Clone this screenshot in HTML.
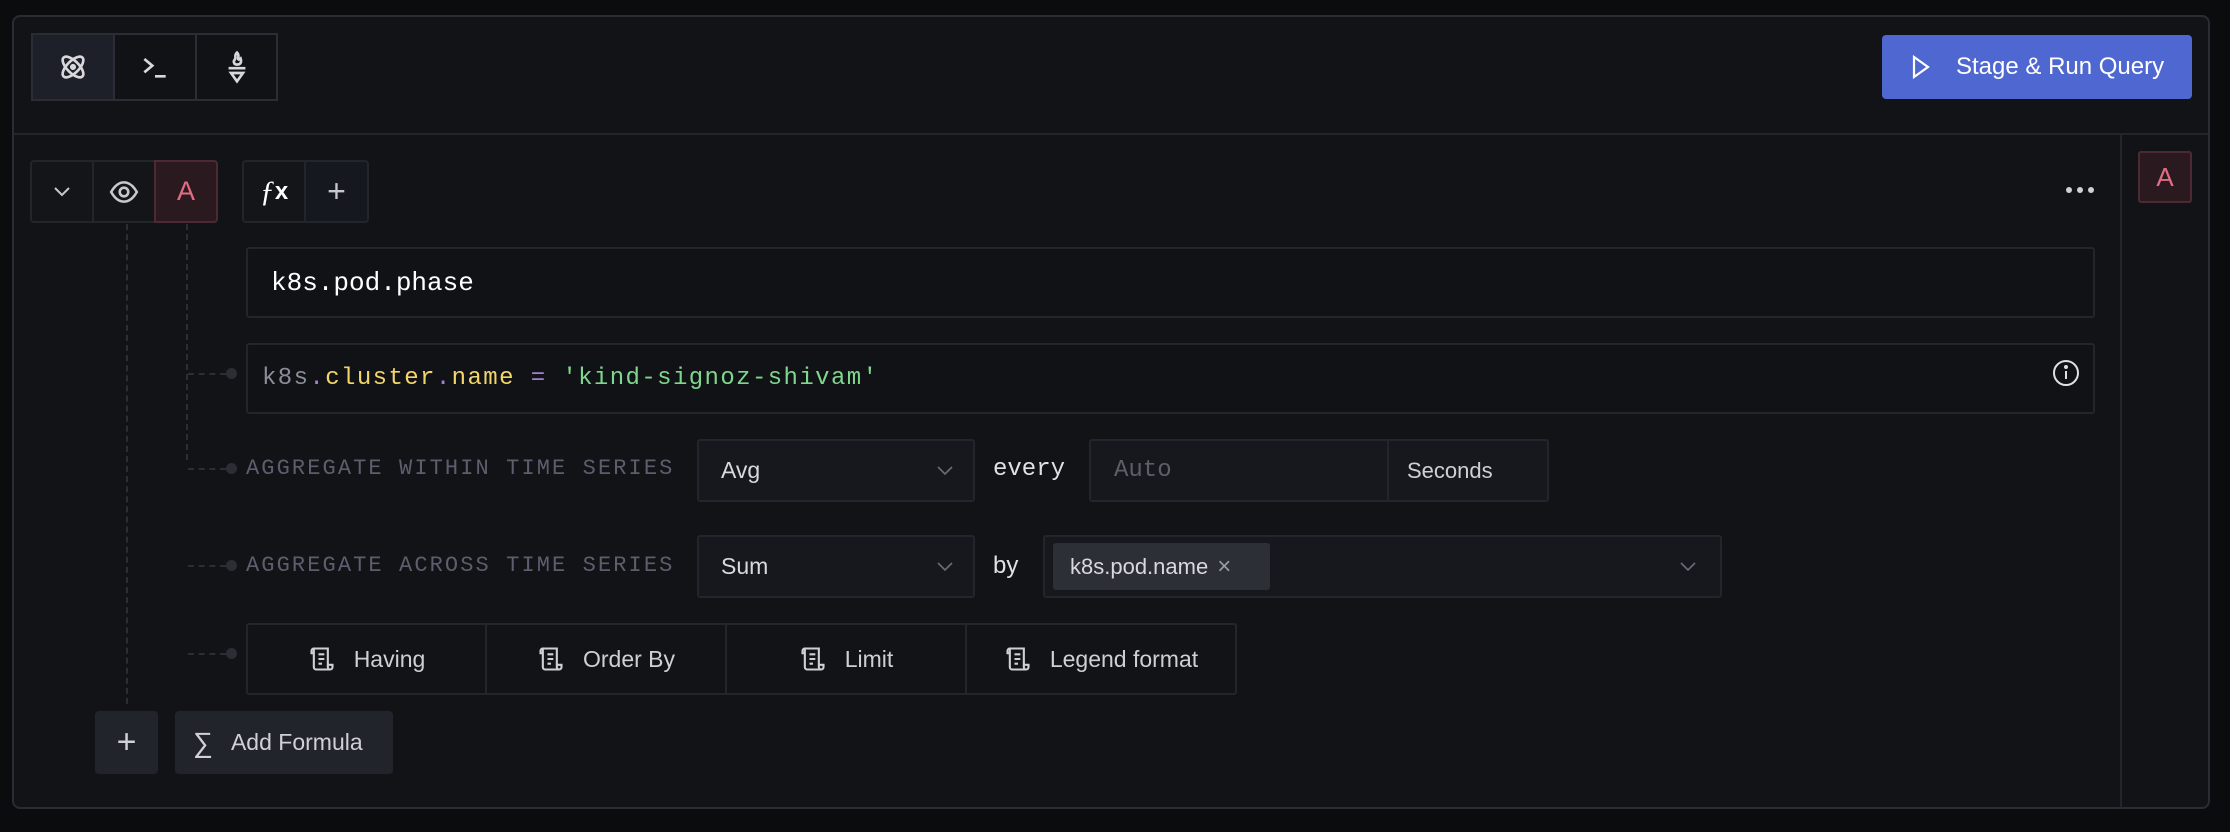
<!DOCTYPE html>
<html><head><meta charset="utf-8"><style>
*{box-sizing:border-box;margin:0;padding:0}
body{width:2230px;height:832px;background:#0b0c0e;position:relative;overflow:hidden;font-family:"Liberation Sans",sans-serif;color:#c4c5cb}
.a{position:absolute}
.panel{left:12px;top:15px;width:2198px;height:794px;background:#121317;border:2px solid #2a2c33;border-radius:8px}
.b{position:absolute;border:2px solid #23252d;display:flex;align-items:center;justify-content:center}
.mono{font-family:"Liberation Mono",monospace}
.lbl{font-family:"Liberation Mono",monospace;font-size:22px;color:#5b5f6d;letter-spacing:2.1px}
.sel{background:#17181d;border:2px solid #23252d;border-radius:3px;display:flex;align-items:center;font-size:23px;color:#d8d9de}
.dv{position:absolute;border-left:2px dashed #2c2e36}
.dh{position:absolute;border-top:2px dashed #2c2e36;width:38px}
.dot{position:absolute;width:11px;height:11px;border-radius:50%;background:#2c2e36}
</style></head><body>
<div class="a panel"></div>
<!-- top toolbar -->
<div class="b" style="left:31px;top:33px;width:84px;height:68px;background:#1e2029;border-color:#2a2c36">
<svg width="32" height="32" viewBox="0 0 24 24" fill="none" stroke="#d8d8dc" stroke-width="2"><ellipse cx="12" cy="12" rx="10" ry="4.5" transform="rotate(45 12 12)"/><ellipse cx="12" cy="12" rx="10" ry="4.5" transform="rotate(-45 12 12)"/><circle cx="12" cy="12" r="1.3" fill="#d8d8dc"/></svg></div>
<div class="b" style="left:113px;top:33px;width:84px;height:68px;background:#111216;border-color:#2a2c36">
<svg width="32" height="32" viewBox="0 0 24 24" fill="none" stroke="#d8d8dc" stroke-width="2"><path d="M4 6l6 5-6 5M12 19h8"/></svg></div>
<div class="b" style="left:195px;top:33px;width:83px;height:68px;background:#111216;border-color:#2a2c36">
<svg width="24" height="34" viewBox="0 0 20 28" fill="none" stroke="#d8d8dc" stroke-width="2.2"><path d="M10 2c-3 3 0 4-2 6-1 1-1 4 2 4s4-2 3-5c-1 1-2 1-2 0s1-3-1-5z"/><path d="M3 15h14M5 19h10l-5 7z"/></svg></div>
<!-- run button -->
<div class="a" style="left:1882px;top:35px;width:310px;height:64px;background:#4e67d1;border-radius:4px;display:flex;align-items:center;color:#fff;font-size:24px">
<svg style="margin-left:30px;margin-right:26px" width="18" height="24" viewBox="0 0 18 24" fill="none" stroke="#fff" stroke-width="2.2"><path d="M2 2l14 10L2 22z"/></svg>Stage &amp; Run Query</div>
<div class="a" style="left:14px;top:133px;width:2194px;height:2px;background:#23252c"></div>
<div class="a" style="left:2120px;top:135px;width:2px;height:672px;background:#23252c"></div>
<div class="a" style="left:2138px;top:151px;width:54px;height:52px;background:#2a1a20;border:2px solid #4d2a32;border-radius:3px;color:#e06d84;font-size:26px;display:flex;align-items:center;justify-content:center">A</div>
<!-- query header -->
<div class="b" style="left:30px;top:160px;width:64px;height:63px;border-radius:4px 0 0 4px;background:#141519">
<svg width="20" height="12" viewBox="0 0 20 12" fill="none" stroke="#c8c8cc" stroke-width="2"><path d="M3 2l7 7 7-7"/></svg></div>
<div class="b" style="left:92px;top:160px;width:64px;height:63px;background:#141519">
<svg width="30" height="24" viewBox="0 0 28 22" fill="none" stroke="#c8c8cc" stroke-width="2.4"><path d="M2 11C6 4 10 2 14 2s8 2 12 9c-4 7-8 9-12 9S6 18 2 11z"/><circle cx="14" cy="11" r="4"/></svg></div>
<div class="b" style="left:154px;top:160px;width:64px;height:63px;background:#2a1a20;border-color:#4d2a32;border-radius:0 4px 4px 0;color:#e06d84;font-size:27px">A</div>
<div class="b" style="left:242px;top:160px;width:64px;height:63px;background:#141519;border-radius:4px 0 0 4px;color:#fff;font-size:30px;font-style:italic;font-family:'Liberation Serif',serif">ƒ<span style="font-style:normal;font-family:'Liberation Sans';font-size:24px;font-weight:bold">x</span></div>
<div class="b" style="left:304px;top:160px;width:65px;height:63px;background:#161820;border-radius:0 4px 4px 0;color:#c8c8cc;font-size:32px;font-weight:300">+</div>
<div class="a" style="left:2066px;top:187px;display:flex;gap:5px"><i style="width:6px;height:6px;border-radius:50%;background:#d0d0d4"></i><i style="width:6px;height:6px;border-radius:50%;background:#d0d0d4"></i><i style="width:6px;height:6px;border-radius:50%;background:#d0d0d4"></i></div>
<!-- tree -->
<div class="dv" style="left:126px;top:224px;height:480px"></div>
<div class="dv" style="left:186px;top:224px;height:236px"></div>
<div class="dh" style="left:188px;top:373px"></div><div class="dot" style="left:226px;top:368px"></div>
<div class="dh" style="left:188px;top:468px"></div><div class="dot" style="left:226px;top:463px"></div>
<div class="dh" style="left:188px;top:565px"></div><div class="dot" style="left:226px;top:560px"></div>
<div class="dh" style="left:188px;top:653px"></div><div class="dot" style="left:226px;top:648px"></div>
<!-- metric -->
<div class="a mono" style="left:246px;top:247px;width:1849px;height:71px;border:2px solid #23252d;border-radius:3px;background:#111216;color:#fff;font-size:26px;display:flex;align-items:center;padding-left:23px">k8s.pod.phase</div>
<div class="a mono" style="left:246px;top:343px;width:1849px;height:71px;border:2px solid #23252d;border-radius:3px;background:#111216;font-size:24px;letter-spacing:1.4px;display:flex;align-items:center;padding-left:14px"><span style="white-space:pre"><span style="color:#8a8e99">k8s</span><span style="color:#a27ed6">.</span><span style="color:#f2d66b">cluster</span><span style="color:#a27ed6">.</span><span style="color:#f2d66b">name</span> <span style="color:#a27ed6">=</span> <span style="color:#7fd68e">'kind-signoz-shivam'</span></span></div>
<svg class="a" style="left:2052px;top:359px" width="28" height="28" viewBox="0 0 28 28" fill="none" stroke="#e0e0e4" stroke-width="2"><circle cx="14" cy="14" r="12"/><path d="M14 12v8"/><circle cx="14" cy="8" r="1" fill="#e0e0e4"/></svg>
<!-- agg rows -->
<div class="a lbl" style="left:246px;top:456px">AGGREGATE WITHIN TIME SERIES</div>
<div class="a sel" style="left:697px;top:439px;width:278px;height:63px;padding-left:22px">Avg<svg style="position:absolute;right:20px" width="16" height="10" viewBox="0 0 16 10" fill="none" stroke="#6a6d78" stroke-width="1.6"><path d="M1 1l7 7 7-7"/></svg></div>
<div class="a mono" style="left:993px;top:456px;font-size:24px;color:#e0e1e5">every</div>
<div class="a sel" style="left:1089px;top:439px;width:300px;height:63px;padding-left:23px;border-radius:3px 0 0 3px;font-family:'Liberation Mono',monospace;color:#5c5f69;font-size:24px">Auto</div>
<div class="a sel" style="left:1387px;top:439px;width:162px;height:63px;padding-left:18px;border-radius:0 3px 3px 0;font-size:22px;color:#cfd0d5">Seconds</div>
<div class="a lbl" style="left:246px;top:553px">AGGREGATE ACROSS TIME SERIES</div>
<div class="a sel" style="left:697px;top:535px;width:278px;height:63px;padding-left:22px">Sum<svg style="position:absolute;right:20px" width="16" height="10" viewBox="0 0 16 10" fill="none" stroke="#6a6d78" stroke-width="1.6"><path d="M1 1l7 7 7-7"/></svg></div>
<div class="a" style="left:993px;top:552px;font-size:24px;color:#e0e1e5">by</div>
<div class="a sel" style="left:1043px;top:535px;width:679px;height:63px"><div style="margin-left:8px;height:47px;width:217px;background:#2d2f36;border-radius:3px;display:flex;align-items:center;padding-left:17px;font-size:22px;color:#d8d9de">k8s.pod.name<span style="margin-left:9px;color:#9a9ca4;font-size:24px">×</span></div><svg style="position:absolute;right:24px" width="16" height="10" viewBox="0 0 16 10" fill="none" stroke="#6a6d78" stroke-width="1.6"><path d="M1 1l7 7 7-7"/></svg></div>
<!-- buttons row -->
<div class="a" style="left:246px;top:623px;width:991px;height:72px;border:2px solid #23252d;border-radius:3px;display:flex;font-size:23px;color:#cfd0d5">
<div style="width:239px;border-right:2px solid #23252d;display:flex;align-items:center;justify-content:center;gap:18px"><svg width="28" height="28" viewBox="0 0 24 24" fill="none" stroke="#cfd0d5" stroke-width="1.8"><path d="M5 3h12v16a2 2 0 002 2H7a2 2 0 01-2-2V3zM5 3a2 2 0 00-2 2v2h2M9 8h5M9 12h5M9 16h3M17 19v-2h4v2a2 2 0 01-2 2"/></svg>Having</div>
<div style="width:240px;border-right:2px solid #23252d;display:flex;align-items:center;justify-content:center;gap:18px"><svg width="28" height="28" viewBox="0 0 24 24" fill="none" stroke="#cfd0d5" stroke-width="1.8"><path d="M5 3h12v16a2 2 0 002 2H7a2 2 0 01-2-2V3zM5 3a2 2 0 00-2 2v2h2M9 8h5M9 12h5M9 16h3M17 19v-2h4v2a2 2 0 01-2 2"/></svg>Order By</div>
<div style="width:240px;border-right:2px solid #23252d;display:flex;align-items:center;justify-content:center;gap:18px"><svg width="28" height="28" viewBox="0 0 24 24" fill="none" stroke="#cfd0d5" stroke-width="1.8"><path d="M5 3h12v16a2 2 0 002 2H7a2 2 0 01-2-2V3zM5 3a2 2 0 00-2 2v2h2M9 8h5M9 12h5M9 16h3M17 19v-2h4v2a2 2 0 01-2 2"/></svg>Limit</div>
<div style="flex:1;display:flex;align-items:center;justify-content:center;gap:18px"><svg width="28" height="28" viewBox="0 0 24 24" fill="none" stroke="#cfd0d5" stroke-width="1.8"><path d="M5 3h12v16a2 2 0 002 2H7a2 2 0 01-2-2V3zM5 3a2 2 0 00-2 2v2h2M9 8h5M9 12h5M9 16h3M17 19v-2h4v2a2 2 0 01-2 2"/></svg>Legend format</div>
</div>
<!-- bottom buttons -->
<div class="a" style="left:95px;top:711px;width:63px;height:63px;background:#22242b;border-radius:4px;display:flex;align-items:center;justify-content:center;color:#d0d1d6;font-size:34px;font-weight:300">+</div>
<div class="a" style="left:175px;top:711px;width:218px;height:63px;background:#22242b;border-radius:4px;display:flex;align-items:center;padding-left:18px;color:#d0d1d6;font-size:23px"><span style="font-size:28px;margin-right:18px">∑</span>Add Formula</div>
</body></html>
